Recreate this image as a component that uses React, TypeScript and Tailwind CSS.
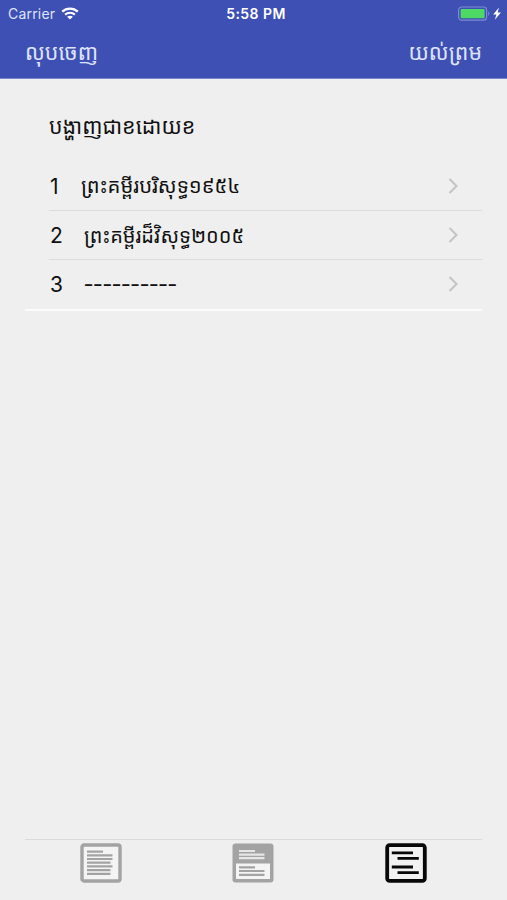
import React from "react";

const rows = [
  { id: 1, label: "ព្រះគម្ពីរបរិសុទ្ធ១៩៥៤", className: "ml-[31px] text-[20.3px]" },
  { id: 2, label: "ព្រះគម្ពីរដ៏វិសុទ្ធ២០០៥", className: "ml-[34px] text-[20px]" },
  { id: 3, label: "----------", className: "ml-[33.5px] text-[22px] tracking-[-0.8px]" },
];

const WifiIcon = () => (
  <svg className="ml-1.5 h-[13px] w-[18px]" viewBox="0 0 18 13" fill="none" stroke="#fff" strokeWidth="2.2">
    <path d="M1.2 4.6C5.6.5 12.4.5 16.8 4.6" />
    <path d="M4.1 7.6C6.9 5.1 11.1 5.1 13.9 7.6" />
    <path d="M9 12.6 6.1 9.8C7.7 8.3 10.3 8.3 11.9 9.8Z" fill="#fff" stroke="none" />
  </svg>
);

const BatteryIcon = () => (
  <svg className="h-4 w-[46px]" viewBox="0 0 46 16">
    <rect x=".6" y="1" width="28" height="13.2" rx="3" fill="none" stroke="#7f8bd0" strokeWidth="1.2" />
    <rect x="2.6" y="3" width="24" height="9.2" rx="1" fill="#4cd964" />
    <path d="M30.2 5.2c1.6.8 1.6 4 0 4.8z" fill="#7f8bd0" />
    <path d="M41 1.6 35.2 8.4h3.2L36.9 13.8l6-7.2h-3.3z" fill="#fff" />
  </svg>
);

const Chevron = () => (
  <svg className="mr-[23px] h-[18px] w-3" viewBox="0 0 12 18" fill="none" stroke="#c3c3c5" strokeWidth="2">
    <path d="M2.5 2 9.5 9 2.5 16" />
  </svg>
);

const ListIcon = () => (
  <svg className="h-10 w-[42px]" viewBox="0 0 42 40" fill="none" stroke="#a3a3a3">
    <rect x="2" y="2" width="38" height="36" rx="2" fill="#f4f4f4" strokeWidth="3.4" />
    <path strokeWidth="2.2" d="M7 8.6H23M7 12.3H32.5M7 16H32.5M7 19.7H30.5M7 23.4H32.5M7 27.1H30.5M7 30.8H30.5" />
  </svg>
);

const SplitIcon = () => (
  <svg className="h-10 w-[42px]" viewBox="0 0 42 40" fill="none">
    <rect x=".5" y=".5" width="41" height="39" rx="3" fill="#a3a3a3" />
    <rect x="4" y="20.5" width="34" height="15.5" fill="#f4f4f4" />
    <path stroke="#e6e6e6" strokeWidth="2.2" d="M7 8H23M7 11.6H32.5M7 15.2H32.5" />
    <path stroke="#a3a3a3" strokeWidth="2.2" d="M7 24.4H23M7 28H32.5M7 31.8H32.5" />
  </svg>
);

const StaggeredIcon = () => (
  <svg className="h-10 w-[42px]" viewBox="0 0 42 40" fill="none" stroke="#080808">
    <rect x="2.2" y="2.2" width="37.6" height="35.6" rx="2.4" fill="#f2f2f2" strokeWidth="3.8" />
    <path strokeWidth="2.8" d="M6.8 9.8H28M12.5 15.4H33.8M6.8 24H28M12.5 29.6H33.8" />
  </svg>
);

const App = () => {
  return (
    <div className="flex h-screen flex-col overflow-hidden bg-[#efefef] font-[Inter,'Noto_Sans_Khmer','Khmer_OS',sans-serif] text-[#101010]">
      <header className="h-[79px] shrink-0 border-b border-[#7b86cc] bg-[#3e50b4] text-[#dfe4fb]">
        <div className="grid h-[27px] grid-cols-3 items-center pr-[3px] pl-2">
          <div className="flex items-center text-[14px] tracking-[0.2px]">
            Carrier
            <WifiIcon />
          </div>
          <span className="text-center text-[14px] font-semibold tracking-[0.45px] whitespace-nowrap text-white">5:58 PM</span>
          <div className="flex justify-end">
            <BatteryIcon />
          </div>
        </div>
        <div className="flex h-[50px] items-center justify-between px-[25px] text-[21.4px] whitespace-nowrap">
          <button>លុបចេញ</button>
          <button>យល់ព្រម</button>
        </div>
      </header>

      <main className="mx-[25px] flex-1">
        <h1 className="flex h-[83px] items-center pt-3 pl-6 text-[21.3px] whitespace-nowrap">បង្ហាញជាខដោយខ</h1>
        <ul className="border-b-2 border-[#fbfbfb]">
          {rows.map((row) => (
            <li key={row.id} className="ml-6 flex h-[49px] items-center border-b border-[#dcdcdc] last:border-b-0 last:pb-px">
              <span className="w-0 pt-0.5 pl-px text-[21px]">{row.id}</span>
              <span className={`flex-1 pt-px whitespace-nowrap ${row.className}`}>{row.label}</span>
              <Chevron />
            </li>
          ))}
        </ul>
      </main>

      <footer className="mx-[25px] flex h-[61px] shrink-0 justify-between border-t border-[#dadada] pt-[3px] pr-[55.5px] pl-[55px]">
        <ListIcon />
        <SplitIcon />
        <StaggeredIcon />
      </footer>
    </div>
  );
};

export default App;
